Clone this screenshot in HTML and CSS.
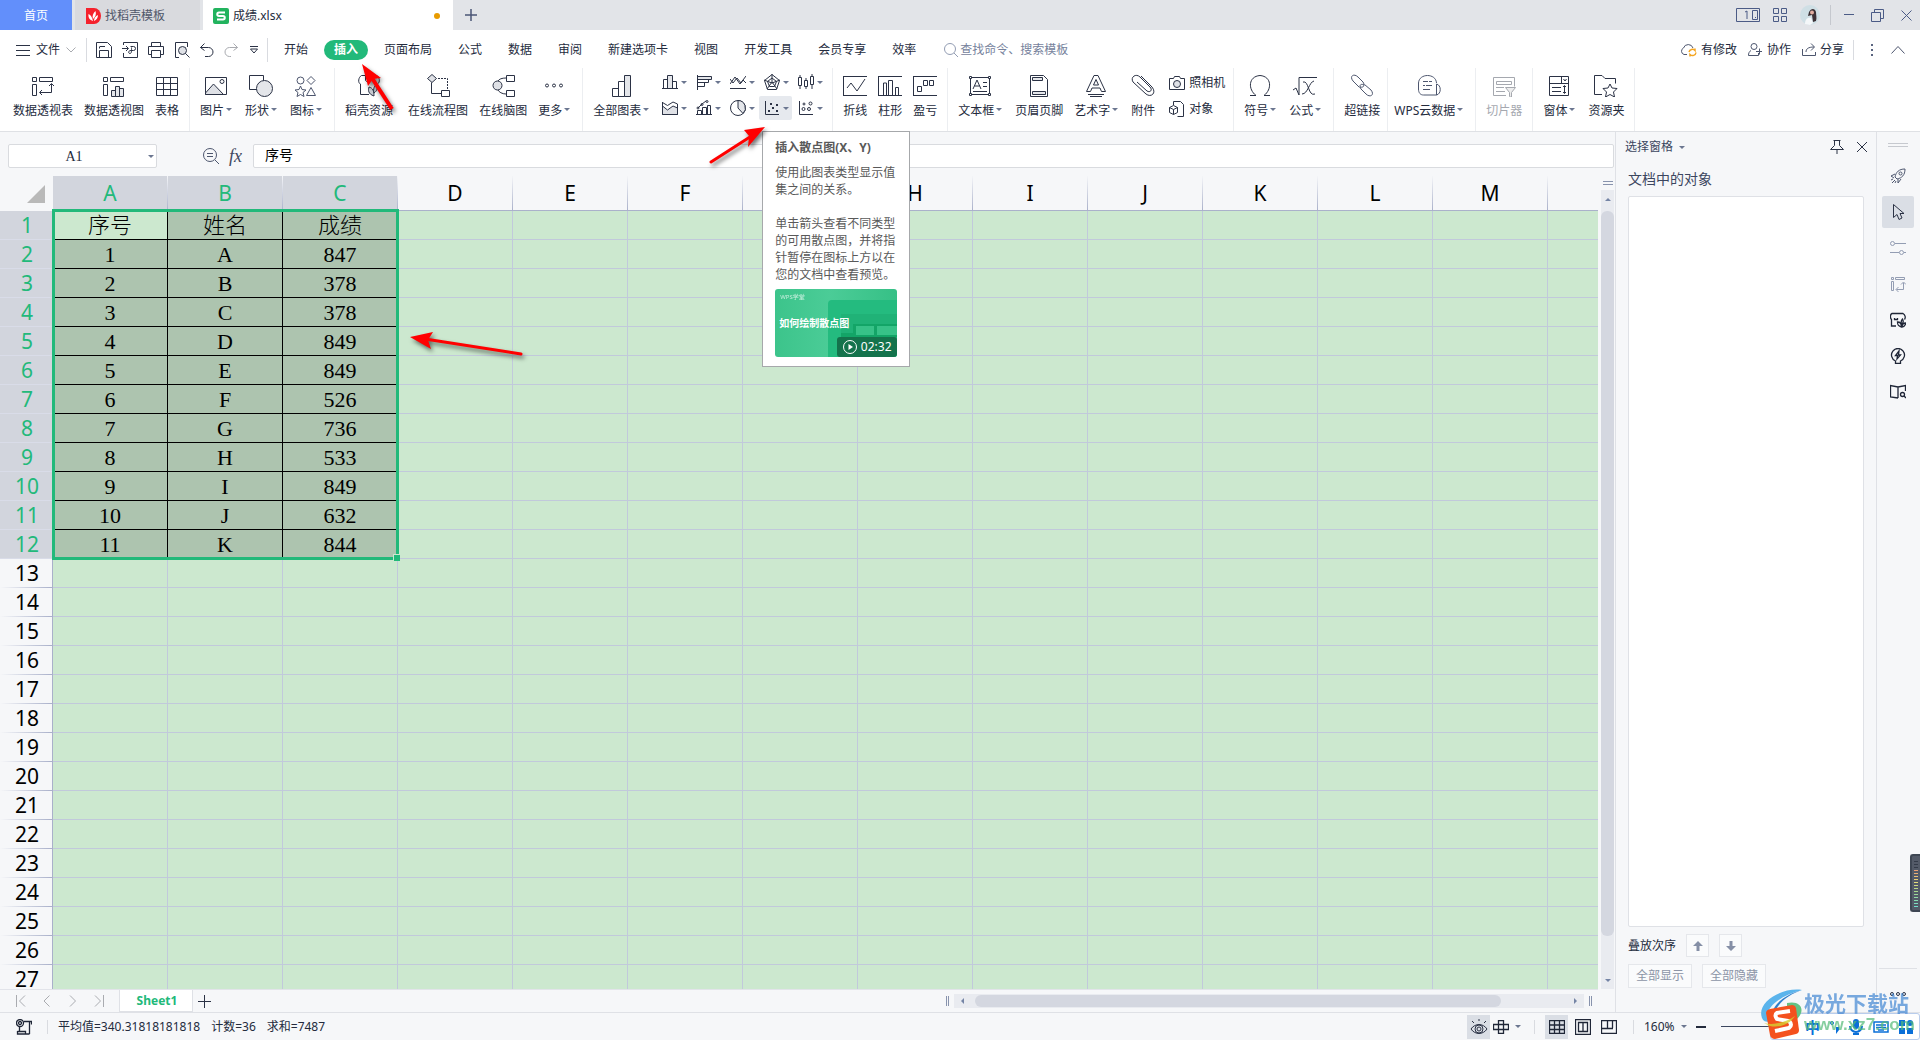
FILE: index.html
```html
<!DOCTYPE html>
<html lang="zh-CN">
<head>
<meta charset="utf-8">
<title>成绩.xlsx</title>
<link rel="stylesheet" href="styles.css">
</head>
<body>
<header class="titlebar">
  <button class="tab tab-home">首页</button>
  <button class="tab tab-docer"><svg width="15" height="16" viewBox="0 0 15 16"><path d="M0 0h8a7 8 0 0 1 0 16H0z" fill="#f5222d"/><path d="M7 13C4 12 2 10 2.500 6 5 7 6 9 7 13zM7 11C6 8 7 5 9.500 3c1 3 0 6-2.500 8zM8 13c0-3 1.500-5 4-6 0 3-1.500 5-4 6z" fill="#fff"/></svg>找稻壳模板</button>
  <button class="tab tab-file"><svg width="16" height="16" viewBox="0 0 16 16"><rect width="16" height="16" rx="2" fill="#22b35e"/><path d="M12 4.500H6A1.700 1.700 0 0 0 6 8h4a1.700 1.700 0 0 1 0 3.500H4" fill="none" stroke="#fff" stroke-width="2"/></svg><span>成绩.xlsx</span><i class="dot"></i></button>
  <button class="tab-add" aria-label="新建"><svg width="12" height="12" viewBox="0 0 12 12"><path d="M6 0v12M0 6h12" stroke="#4b5675" stroke-width="1.500"/></svg></button>
  <div class="window-tools">
    <svg width="24" height="14" viewBox="0 0 24 14" class="line blue"><path d="M.5.500h23v13H.5zM16.500 2.500h5v9h-5zM9 4l2-1v8M19 9.500h1"/></svg>
    <svg width="14" height="14" viewBox="0 0 14 14" class="line blue"><path d="M.5.500h5v5h-5zM8.500.500h5v5h-5zM.5 8.500h5v5h-5zM8.500 8.500h5v5h-5z"/></svg>
    <svg width="20" height="20" viewBox="0 0 20 20"><circle cx="10" cy="10" r="10" fill="#cfdfe5"/><path d="M9 7c2-4 6-4 7 0 0 3 1 6 0 9l-3 1-1-7-4 1z" fill="#3b3035"/><path d="M5 19c0-4 2-7 6-6l2 5-3 2z" fill="#f4f7f9"/><circle cx="12" cy="7.500" r="2" fill="#e0ada0"/></svg>
    <span class="vr"></span>
    <svg width="10" height="12" viewBox="0 0 10 12" class="line blue"><path d="M0 5.500h10"/></svg>
    <svg width="13" height="13" viewBox="0 0 13 13" class="line blue"><path d="M.5 3.500h9v9h-9zM3.500 3.500v-3h9v9h-3"/></svg>
    <svg width="11" height="11" viewBox="0 0 11 11" class="line blue"><path d="M.5.500l10 10M10.500.500l-10 10"/></svg>
  </div>
</header>

<nav class="menubar">
  <button class="file-menu"><svg width="14" height="11" viewBox="0 0 14 11" class="line"><path d="M0 .5h14M0 5.500h14M0 10.500h14"/></svg>文件<svg width="10" height="6" viewBox="0 0 10 6" class="line grey"><path d="M.5.500L5 5 9.500.500"/></svg></button>
  <span class="vr"></span>
  <div class="quick">
    <button aria-label="保存"><svg width="16" height="16" viewBox="0 0 16 16" class="line"><path d="M.5.500h11l4 4v11H.5zM3.500 15v-6.500h9V15M4 4.500h5M3.500 4.500v2"/></svg></button>
    <button aria-label="输出为PDF"><svg width="16" height="16" viewBox="0 0 16 16" class="line"><path d="M1.500 3V.5h14v15h-14V11M0 6.500h6M4 4l2.500 2.500L4 9M8.500 4.500h3a2 2 0 0 1 0 4H9c-3 0-3 3-1 3s1.500-4 1.500-6"/></svg></button>
    <button aria-label="打印"><svg width="16" height="16" viewBox="0 0 16 16" class="line"><path d="M3.500 4.500v-4h9v4M3.500 12.500h-3v-8h15v8h-3M3.500 8.500h9v7h-9z"/></svg></button>
    <button aria-label="打印预览"><svg width="16" height="16" viewBox="0 0 16 16" class="line"><path d="M5 15.500H1.500V.5h12V5"/><circle cx="8.500" cy="8.500" r="4" fill="#dfe1e6"/><path d="M11.500 11.500l4 4"/></svg></button>
    <button aria-label="撤销"><svg width="14" height="14" viewBox="0 0 14 14" class="line"><path d="M4.500.500L.5 4.500l4 3M.5 4.500h8a4.500 4.500 0 0 1 0 9H5"/></svg></button>
    <button aria-label="恢复"><svg width="14" height="14" viewBox="0 0 14 14" class="line grey"><path d="M9.500.500l4 4-4 3M13.500 4.500h-8a4.500 4.500 0 0 0 0 9H7"/></svg></button>
    <button aria-label="更多快捷"><svg width="8" height="8" viewBox="0 0 8 8" class="line"><path d="M0 .5h8M.5 3l3.500 4L7.500 3z"/></svg></button>
  </div>
  <span class="vr"></span>
  <div class="menus">
    <button>开始</button><button class="active">插入</button><button>页面布局</button><button>公式</button><button>数据</button><button>审阅</button><button>新建选项卡</button><button>视图</button><button>开发工具</button><button>会员专享</button><button>效率</button>
  </div>
  <label class="search"><svg width="14" height="14" viewBox="0 0 14 14" class="line soft"><circle cx="6" cy="6" r="5.500"/><path d="M10 10l4 4"/></svg><input type="text" placeholder="查找命令、搜索模板" aria-label="查找命令"></label>
  <div class="share">
    <button><svg width="17" height="14" viewBox="0 0 17 14" class="line slate"><path d="M7 11.500H4A3.500 3.500 0 0 1 3.500 5a5 5 0 0 1 9.500 0"/><path d="M9 9a3.500 3.500 0 0 1 6-1.500V5.500M16 9.500a3.500 3.500 0 0 1-6 2v2" stroke="#f5a623" stroke-width="1.500"/></svg>有修改</button>
    <button><svg width="15" height="14" viewBox="0 0 15 14" class="line slate"><circle cx="6" cy="3.500" r="3"/><path d="M3 7.500c-2 1-2.500 3-2.500 5h10V10M8 8.500h6M11.500 5.500v6"/></svg>协作</button>
    <button><svg width="14" height="14" viewBox="0 0 14 14" class="line slate"><path d="M.5 6v6.500h13V9M4 9c0-3 2-5 8-5M9 .5L12.500 4 9 7.500"/></svg>分享</button>
    <span class="vr"></span>
    <button aria-label="更多"><svg width="3" height="12" viewBox="0 0 3 12"><path d="M0 0h2v2H0zM0 5h2v2H0zM0 10h2v2H0z" fill="#59647f"/></svg></button>
    <button aria-label="收起"><svg width="14" height="8" viewBox="0 0 14 8" class="line slate"><path d="M.5 7.500L7 .5l6.500 7"/></svg></button>
  </div>
</nav>

<section class="ribbon">
  <div class="group">
    <button><svg class="big line" viewBox="0 0 24 24"><path d="M1.500 4.500h4v4h-4zM8.500 4.500h13v4h-13zM1.500 11.500h4v11h-4zM20.500 11v8.500H9M18 13l2.500-2.500L23 13M11 17l-2.500 2.500L11 22"/></svg>数据透视表</button>
    <button><svg class="big line" viewBox="0 0 24 24"><path d="M1.500 4.500h4v4h-4zM8.500 4.500h13v4h-13zM1.500 11.500h4v11h-4z"/><path fill="#e4e6ea" d="M9.500 17.500h4v6h-4zM13.500 13.500h4v10h-4zM17.500 15.500h4v8h-4z"/></svg>数据透视图</button>
    <button><svg class="big line" viewBox="0 0 24 24"><path d="M1.500 4.500h21v18h-21zM1.500 10.500h21M1.500 16.500h21M8.500 4.500v18M15.500 4.500v18"/></svg>表格</button>
  </div>
  <div class="group">
    <button class="drop"><svg class="big line" viewBox="0 0 24 24"><path d="M1.500 4.500h21v17h-21z"/><path fill="#dfe1e6" d="M1.500 20l8-9 10 10.500h-18z"/><circle cx="18" cy="8.500" r="2"/></svg>图片</button>
    <button class="drop"><svg class="big line" viewBox="0 0 24 24"><path d="M.5 2.500h14v14H.5z"/><circle cx="15.500" cy="15.500" r="8" fill="#e4e6ea"/></svg>形状</button>
    <button class="drop"><svg class="big line slate" viewBox="0 0 24 24"><circle cx="6.500" cy="7.500" r="3.500"/><path d="M17 3.500L21 7.500l-4 4-4-4zM17 14.500l4.500 8h-9zM6.500 13l1.500 3.500 4 .5-3 2.500 1 4-3.500-2-3.500 2 1-4-3-2.500 4-.5z"/></svg>图标</button>
  </div>
  <div class="group">
    <button><svg class="big line" viewBox="0 0 24 24"><path d="M3.500 11v10.500H12M3.500 11c-3-1-2-7 1-8.500h15c3 1 4 7 1 8.500M8.500 2.500v5a3 3 0 0 0 5 0v-5"/><path fill="#c9ccd3" d="M17 23c-6-2-6-6-5-9 4 1 5 4 5 9zM17 20c-1-4 0-7 3-9 1 4 0 7-3 9z"/></svg>稻壳资源</button>
    <button class="flow"><svg class="big line" viewBox="0 0 24 24"><path fill="#dfe1e6" d="M6 1.500l4.500 4L6 9.500l-4.500-4z"/><path d="M5.500 9.500v11h10M15.500 17.500h8v6h-8z"/><path stroke-dasharray="2 1" d="M12 5.500h9.500V17"/></svg>在线流程图</button>
    <button><svg class="big line" viewBox="0 0 24 24"><circle cx="6.500" cy="12.500" r="4.500" fill="#dfe1e6"/><path d="M15.500 2.500h8v6h-8zM15.500 17.500h8v6h-8zM7 8c1-2 4-3 8-3M7 17c1 2 4 4 8 4"/></svg>在线脑图</button>
    <button class="drop"><svg class="big line" viewBox="0 0 24 24"><circle cx="5" cy="12.500" r="1.500"/><circle cx="12" cy="12.500" r="1.500"/><circle cx="19" cy="12.500" r="1.500"/></svg>更多</button>
  </div>
  <div class="group charts">
    <button class="drop"><svg class="big line" viewBox="0 0 24 24"><path d="M3.500 15.500h6v8h-6zM9.500 8.500h6v15h-6z"/><path fill="#e4e6ea" d="M15.500 2.500h6v21h-6z"/></svg>全部图表</button>
    <div class="chart-grid">
      <button class="mini" aria-label="柱形图"><svg class="small line" viewBox="0 0 16 16"><path fill="#e4e6ea" d="M5.500 1.500h5v13h-5z"/><path d="M1.500 5.500h4v9h-4zM10.500 7.500h4v7h-4zM0 14.500h16"/></svg></button>
      <button class="mini" aria-label="条形图"><svg class="small line" viewBox="0 0 16 16"><path fill="#e4e6ea" d="M1.500 2.500h14v3h-14z"/><path d="M1.500 1v15M1.500 5.500h11v3h-11M1.500 8.500h7v4h-7"/></svg></button>
      <button class="mini" aria-label="折线图"><svg class="small line" viewBox="0 0 16 16"><path d="M0 10l5-7 5 7 6-8M0 5l3 4 4-5 4 5 2-3 3 3M0 14.500h16"/></svg></button>
      <button class="mini" aria-label="雷达图"><svg class="small line" viewBox="0 0 16 16"><path d="M8 .5l7.500 6-3 9h-9l-3-9zM8 4l4.500 3.500-2 5h-5l-2-5zM8 0v8M0 6l8 3 8-3M3 15l5-7 5 7"/></svg></button>
      <button class="mini" aria-label="股价图"><svg class="small line" viewBox="0 0 16 16"><path d="M.5 3.500h3v8h-3zM6.500 6.500h3v6h-3zM12.500 2.500h3v8h-3zM2 1v2M2 12v3M8 4v2M8 13v2M14 0v2M14 11v4"/></svg></button>
      <button class="mini" aria-label="面积图"><svg class="small line" viewBox="0 0 16 16"><path d="M.5 2.500l5 3L11 2l4.500 2"/><path fill="#dfe1e6" d="M.5 6l5 4L11 6l4.500 2v6.500H.5z"/><path d="M.5 2v12.500h15V4"/></svg></button>
      <button class="mini" aria-label="组合图"><svg class="small line" viewBox="0 0 16 16"><path d="M1.500 10.500h4v4h-4zM6.500 7.500h4v7h-4zM11.500 5.500h3v9h-3zM0 14.500h16M2 8l4-4 4-3"/><circle cx="2" cy="8" r="1"/><circle cx="6" cy="4.500" r="1"/><circle cx="11" cy="1.500" r="1"/></svg></button>
      <button class="mini" aria-label="饼图"><svg class="small line" viewBox="0 0 16 16"><circle cx="8" cy="8" r="7.500"/><path fill="#e4e6ea" d="M8 .5V8l5 5.500A7.500 7.500 0 0 0 8 .5z"/></svg></button>
      <button class="mini on" aria-label="散点图"><svg class="small line" viewBox="0 0 16 16"><path d="M1.500 1v13.500H15"/><path class="solid" d="M4 10h2v2H4zM8 7h2v2H8zM6 3h2v2H6zM12 10h2v2h-2zM12 4h2v2h-2z"/></svg></button>
      <button class="mini" aria-label="其他图表"><svg class="small line" viewBox="0 0 16 16"><path d="M1.500 1v13.500H15"/><circle cx="6" cy="4" r="1"/><circle cx="5.500" cy="9" r="1.500"/><circle cx="11" cy="9" r="1.500"/><circle cx="12.500" cy="3.500" r="1.500"/></svg></button>
      <aside class="tip">
        <h2>插入散点图(X、Y)</h2>
        <p>使用此图表类型显示值集之间的关系。</p>
        <p>单击箭头查看不同类型的可用散点图，并将指针暂停在图标上方以在您的文档中查看预览。</p>
        <div class="video">
          <svg class="sheet-art" width="69" height="57" viewBox="0 0 69 57"><path d="M0 57V4q0-4 4-4h65v57z" fill="#24bb7f"/><path d="M13 14h56v43H13z" fill="#20b277"/><path d="M13 33h56v4H13zM13 46h56v3H13zM25 24h44v2H25zM25 24h3v33h-3zM46 24h3v33h-3z" fill="#13a567"/><path d="M28 26h18v9H28zM49 26h20v9H49z" fill="#37c288"/></svg>
          <small>WPS学堂</small><strong>如何绘制散点图</strong><span class="time"><svg width="14" height="14" viewBox="0 0 14 14"><circle cx="7" cy="7" r="6.500" fill="none" stroke="#fff"/><path d="M5.500 4v6L10 7z" fill="#fff"/></svg>02:32</span></div>
      </aside>
    </div>
  </div>
  <div class="group">
    <button><svg class="big line" viewBox="0 0 24 24"><path d="M.5 3v19M0 3.500h24M0 22.500h24M4 15l4-5 6 8 8-12"/></svg>折线</button>
    <button><svg class="big line" viewBox="0 0 24 24"><path d="M.5 3v19M0 3.500h24M0 22.500h24M5.500 22v-12h3v12M10.500 22V7.500h4V22M17.500 22v-7.500h3V22"/></svg>柱形</button>
    <button><svg class="big line" viewBox="0 0 24 24"><path d="M.5 3v19M0 3.500h24M0 22.500h24M4.500 13.500h4v5h-4zM10.500 7.500h4v5h-4zM16.500 7.500h4v5h-4z"/></svg>盈亏</button>
  </div>
  <div class="group">
    <button class="drop"><svg class="big line" viewBox="0 0 24 24"><path d="M2.500 4.500h19v17h-19zM5 16l4-9 4 9M6.500 13h5M15 9.500h4M15 13.500h4M5 18.500h14"/><path fill="#fff" d="M1.500 3.500h2v2h-2zM20.500 3.500h2v2h-2zM1.500 20.500h2v2h-2zM20.500 20.500h2v2h-2z"/></svg>文本框</button>
    <button><svg class="big line" viewBox="0 0 24 24"><path d="M3.500 2.500h13l4 4v17h-17z"/><path fill="#e4e6ea" d="M5.500 4.500h10v3h-10zM5.500 18.500h13v3h-13z"/></svg>页眉页脚</button>
    <button class="drop"><svg class="big line" viewBox="0 0 24 24"><path d="M2.500 18.500L10 2.500h4l7.500 16h-4L16 15H8l-1.500 3.500zM9.500 12L12 6.500l2.500 5.500zM4 21.500h16M6 23.500h12"/></svg>艺术字</button>
    <button><svg class="big line" viewBox="0 0 24 24"><path d="M10 3l11 11c5 6-1 11-6 7L2 9C-1 4 5 0 9 4l10 10c3 3 0 6-3 4L6 9"/></svg>附件</button>
    <div class="stack">
      <button><svg class="small line" viewBox="0 0 16 16"><path d="M.5 3.500h4l1-2h5l1 2h4v11H.5z"/><circle cx="8" cy="9" r="3.500" fill="#dfe1e6"/></svg>照相机</button>
      <button><svg class="small line" viewBox="0 0 16 16"><path d="M4.500 4V.5h7l3 3v12h-6M4.500 4.500l4 2v5l-4 2-4-2v-5zM.5 6.500l4 2 4-2M4.500 8.500v5"/></svg>对象</button>
    </div>
  </div>
  <div class="group">
    <button class="drop"><svg class="big line" viewBox="0 0 24 24"><path d="M2 22.500h6c-8-6-8-19 4-20 12 1 12 14 4 20h6"/></svg>符号</button>
    <button class="drop"><svg class="big line" viewBox="0 0 24 24"><path d="M0 17l3-2 3 7V4.500h18M10 9c6-2 5 15 12 12M21 8c-5 1-6 13-12 13"/></svg>公式</button>
  </div>
  <div class="group link-group">
    <button><svg class="big line slate" viewBox="0 0 24 24"><path d="M9.500 14.500L3 8C-1 3 4 0 8 4l5 5c2 3 1 6-3 5M14.500 11.500L21 17c4 5-1 8-5 4l-5-5c-2-3-1-6 3-4"/></svg>超链接</button>
  </div>
  <div class="group cloud-group">
    <button class="drop"><svg class="big line slate" viewBox="0 0 24 24"><path d="M19.500 10C19 0 2 0 1.500 10v6c0 4 2 6 5 6h13c5-1 5-10 0-11v11M6 8.500h5M12 8.500h3M6 12.500h2M9 12.500h6M6 16.500h7"/></svg>WPS云数据</button>
  </div>
  <div class="group">
    <button disabled><svg class="big line" viewBox="0 0 24 24"><path d="M14 22.500H1.500v-18h21v9M4.500 8.500h15v3h-15zM4 14.500h8M4 18.500h9"/><path fill="#eee" d="M13.500 14.500h10l-4 5v5l-2-1v-4z"/></svg>切片器</button>
  </div>
  <div class="group last">
    <button class="drop"><svg class="big line" viewBox="0 0 24 24"><path d="M2.500 3.500h19v19h-19zM2.500 10.500h19M14.500 4v6M16.500 6l1.500 2 1.500-2M5 14.500h9M5 18.500h9M17.500 13v7M16 14l1.500-1.500L19 14M16 19l1.500 1.500L19 19"/></svg>窗体</button>
    <button><svg class="big line" viewBox="0 0 24 24"><path d="M8 21.500H.5v-19H8l3 3h10.500v5"/><path d="M16 11l2 4 5 .5-3.500 3.500 1 5-4.500-2.500-4.500 2.500 1-5L9 15.500l5-.5z"/></svg>资源夹</button>
  </div>
</section>

<main class="workspace">
  <div class="editor">
    <div class="formula-bar">
      <div class="name-box"><input type="text" value="A1" aria-label="名称框"></div>
      <div class="fx"><svg width="16" height="16" viewBox="0 0 16 16" class="line slate"><circle cx="7" cy="7" r="6.500"/><path d="M12 12l4 4M4 5.500h6M4 8.500h6"/></svg><em>fx</em></div>
      <input class="formula" type="text" value="序号" aria-label="编辑栏">
    </div>
    <div class="grid-row">
      <div class="grid-view">
        <table class="grid"><thead></thead><tbody></tbody></table>
        <div class="selection"></div>
        <svg class="arrow arrow-table" viewBox="0 0 120 40"><path d="M15 8l96 15" stroke="#f00" stroke-width="3" stroke-linecap="round"/><path d="M0 6l23-5-5 8 3 9z" fill="#f00"/></svg>
      </div>
      <div class="vscroll"><i class="split"></i><div class="track"><i class="thumb"></i></div></div>
    </div>
    <div class="sheet-bar">
      <div class="sheet-nav">
        <button aria-label="第一张"><svg width="10" height="12" viewBox="0 0 10 12" class="line grey"><path d="M.5 0v12M9 .5L3.500 6 9 11.500"/></svg></button>
        <button aria-label="上一张"><svg width="10" height="12" viewBox="0 0 10 12" class="line grey"><path d="M7.500.500L2 6l5.500 5.500"/></svg></button>
        <button aria-label="下一张"><svg width="10" height="12" viewBox="0 0 10 12" class="line grey"><path d="M2 .5L7.500 6 2 11.500"/></svg></button>
        <button aria-label="最后一张"><svg width="10" height="12" viewBox="0 0 10 12" class="line grey"><path d="M9.500 0v12M1 .5L6.500 6 1 11.500"/></svg></button>
      </div>
      <button class="sheet-tab">Sheet1</button>
      <button aria-label="新建工作表"><svg width="13" height="13" viewBox="0 0 13 13" class="line"><path d="M6.500 0v13M0 6.500h13"/></svg></button>
      <div class="hscroll"><i class="bars"></i><div class="track"><i class="thumb"></i></div><i class="bars"></i></div>
    </div>
  </div>
  <aside class="pane">
    <div class="pane-head"><button class="drop-inline">选择窗格</button><svg width="14" height="14" viewBox="0 0 14 14" class="line"><path d="M3.500.500h7M4.500.500v5l-4 4h13l-4-4v-5M7 10v4"/></svg><svg width="10" height="10" viewBox="0 0 10 10" class="line"><path d="M0 0l10 10M10 0L0 10"/></svg></div>
    <h3>文档中的对象</h3>
    <div class="object-list"></div>
    <div class="order"><span>叠放次序</span><button aria-label="上移"><svg width="10" height="10" viewBox="0 0 10 10"><path d="M5 0l5 5H6.500v5h-3V5H0z" fill="#858fa6"/></svg></button><button aria-label="下移"><svg width="10" height="10" viewBox="0 0 10 10"><path d="M5 10L0 5h3.500V0h3v5H10z" fill="#858fa6"/></svg></button></div>
    <div class="showhide"><button>全部显示</button><button>全部隐藏</button></div>
  </aside>
  <aside class="rail">
    <i class="grip"></i>
    <button aria-label="快捷"><svg class="small line slate" viewBox="0 0 16 16"><path d="M5 9c1-5 4-8 10-8 0 6-3 9-8 10zM5 6L1 8l3 2M8 11l0 4 3-4M1 12l2-1M2 15l3-3M5 15l1-2"/><circle cx="10.500" cy="5.500" r="1.500"/></svg></button>
    <button class="on" aria-label="选择"><svg class="small line" viewBox="0 0 16 16"><path d="M3.500.500v13l3.500-3 2 5 3-1.500-2-4.500h4z"/></svg></button>
    <button aria-label="属性"><svg class="small line soft" viewBox="0 0 16 16"><circle cx="2.500" cy="3.500" r="2"/><circle cx="11.500" cy="12.500" r="2"/><path d="M5 3.500h11M0 12.500h9M14 12.500h2"/></svg></button>
    <button aria-label="分析"><svg class="small line soft" viewBox="0 0 16 16"><path d="M1.500 1.500h2v2h-2zM5.500 1.500h9v2h-9zM1.500 5.500h2v9h-2zM13.500 7v6.500h-7M11 8.500L13.500 6 16 8.500M8.500 11L6 13.500 8.500 16"/></svg></button>
    <button aria-label="稻壳"><svg class="small line bold" viewBox="0 0 16 16"><path d="M1.500 7v7H6M1.500 7.500C0 6 0 2 2 1.500h11c2 1 3 4 1.500 6M4.500 6v1.500h3V6"/><path d="M11.500 15c-4-1-4-3-4-5 3 0 4 2 4 5zM11.500 12c-1-3 0-4 1-5 1 2 1 4-1 5zM12 15c0-3 1-4 4-4-1 3-2 4-4 4z"/></svg></button>
    <button aria-label="灵感"><svg class="small line bold" viewBox="0 0 16 16"><path d="M5.500 13A6.500 6.500 0 1 1 10.500 13v2.500h-5zM9 3L5.500 7.500h2L7 11l3.500-4h-2z"/></svg></button>
    <button aria-label="查找"><svg class="small line bold" viewBox="0 0 16 16"><path d="M8 14l-7.500-1V1.500L8 3l7.500-1.500V7M8 3v11"/><circle cx="12.500" cy="10.500" r="2"/><path d="M14 12l2 2"/></svg></button>
    <div class="rail-more"><svg width="18" height="6" viewBox="0 0 18 6" class="line"><circle cx="3" cy="3" r="1.500"/><circle cx="9" cy="3" r="1.500"/><circle cx="15" cy="3" r="1.500"/></svg></div>
  </aside>
</main>

<footer class="status">
  <svg width="16" height="16" viewBox="0 0 16 16" class="line bold"><circle cx="4" cy="4" r="3.500"/><circle cx="4" cy="4" r="1.500"/><path d="M8 2.500h7.500v3M13.500 3v12M3.500 8v4M1.500 12v3h12M1.500 12.500h8v2"/></svg>
  <span class="vr"></span>
  <span class="stats"><span>平均值=340.31818181818</span><span>计数=36</span><span>求和=7487</span></span>
  <div class="views">
    <button class="on" aria-label="护眼模式"><svg width="18" height="16" viewBox="0 0 18 16" class="line"><path d="M1 10c4-6 12-6 16 0-4 6-12 6-16 0zM9 0v2M2 2l2 2M16 2l-2 2"/><circle cx="9" cy="10" r="4"/><circle cx="9" cy="10" r="2"/></svg></button>
    <button class="drop-inline" aria-label="阅读模式"><svg width="16" height="14" viewBox="0 0 16 14" class="line bold"><path d="M5.500.500h5v13h-5zM.5 4.500h15v5H.5z"/></svg></button>
    <span class="vr"></span>
    <button class="on" aria-label="普通视图"><svg width="16" height="14" viewBox="0 0 16 14" class="line bold"><path d="M.5.500h15v13H.5zM0 5h16M0 9.500h16M5.500 0v14M10.500 0v14"/></svg></button>
    <button aria-label="分页预览"><svg width="16" height="16" viewBox="0 0 16 16" class="line bold"><path d="M.5.500h15v15H.5zM3.500 3.500h9v9h-9zM8 3v10"/></svg></button>
    <button aria-label="页面布局"><svg width="16" height="14" viewBox="0 0 16 14" class="line bold"><path d="M.5.500h15v13H.5zM6.500 0v8M11.500 0v8M0 8.500h12"/></svg></button>
    <span class="vr"></span>
    <button class="drop-inline">160%</button>
    <button aria-label="缩小"><svg width="10" height="2" viewBox="0 0 10 2"><path d="M0 0h10v2H0z" fill="#242b3d"/></svg></button>
    <i class="zoom-line"></i>
  </div>
</footer>

<svg class="arrow arrow-menu" viewBox="0 0 50 60"><path d="M14 15l22 34" stroke="#f00" stroke-width="4"/><path d="M6 4l19 14-8 1-5 7z" fill="#f00"/></svg>
<svg class="arrow arrow-chart" viewBox="0 0 70 50"><path d="M4 41l42-27" stroke="#f00" stroke-width="3" stroke-linecap="round"/><path d="M58 6L37 9l5 6-1 11z" fill="#f00"/></svg>
<div class="meter"></div>
<div class="ime">
  <span>中</span>
  <svg width="10" height="16" viewBox="0 0 10 16"><circle cx="2" cy="4" r="1.500" fill="none" stroke="#0a6fd8"/><path d="M6 8h3v3l-3 4z" fill="#0a6fd8"/></svg>
  <svg width="14" height="16" viewBox="0 0 14 16"><rect x="4" width="6" height="10" rx="3" fill="#0a6fd8"/><path d="M1 7a6 6 0 0 0 12 0M7 12v3M4 15h6" stroke="#0a6fd8" stroke-width="2" fill="none"/></svg>
  <svg width="16" height="12" viewBox="0 0 16 12"><path d="M1 1h14v10H1zM3 4h10M3 6.500h10M5 9h6" stroke="#0a6fd8" stroke-width="1.500" fill="none"/></svg>
  <svg width="14" height="14" viewBox="0 0 14 14"><path d="M0 0h6v6H0zM0 8h6v6H0zM8 8h6v6H8z" fill="#0a6fd8"/><circle cx="11" cy="3" r="3" fill="#0a6fd8"/></svg>
</div>
<div class="watermark">
  <svg width="44" height="52" viewBox="0 0 44 52"><path d="M42 2C22-1-4 14 2 30c1 3 4 4 7 4C2 22 18 8 42 2z" fill="#5bb4ec"/><path d="M42 2C26 6 11 17 13 27c6-14 17-21 29-25z" fill="#2f7fcb"/><path d="M27 15c14-3 19 7 10 16-8 8-21 10-30 7 14-1 29-7 28-15 0-4-4-5-8-3z" fill="#64c284"/><path d="M10 21l22-4q3 0 4 3l3 22q0 3-3 4l-21 5q-4 0-5-4L6 25q0-3 4-4z" fill="#f4511e"/><path d="M30 23l-13 2q-3 2 0 6l12 2q4 4 0 7l-14 3" fill="none" stroke="#fff" stroke-width="4"/><path d="M4 35c10 3 22-1 31-7-5 8-15 12-25 10z" fill="#d5ce30" opacity=".8"/></svg>
  <div><b>极光下载站</b><span>www.xz7.com</span></div>
</div>
<script src="grid.js"></script>
</body>
</html>
```
FILE: grid.js
```js
const records = [
  ['序号', '姓名', '成绩'], [1, 'A', 847], [2, 'B', 378], [3, 'C', 378],
  [4, 'D', 849], [5, 'E', 849], [6, 'F', 526], [7, 'G', 736],
  [8, 'H', 533], [9, 'I', 849], [10, 'J', 632], [11, 'K', 844]
];
const letters = [...'ABCDEFGHIJKLM', ''];
const selectedColumns = 3;
const rowCount = 27;

function add(parent, tag, text, className) {
  const el = document.createElement(tag);
  if (text !== undefined) el.textContent = text;
  if (className) el.className = className;
  parent.appendChild(el);
  return el;
}

const head = add(document.querySelector('.grid thead'), 'tr');
add(head, 'th', '', 'corner');
letters.forEach((l, i) => add(head, 'th', l, i < selectedColumns ? 'picked' : ''));

const body = document.querySelector('.grid tbody');
for (let r = 0; r < rowCount; r++) {
  const row = add(body, 'tr');
  const data = records[r];
  add(row, 'th', r + 1, data ? 'picked' : '');
  letters.forEach((_, c) => {
    const filled = data && c < selectedColumns;
    add(row, 'td', filled ? data[c] : '', filled ? (r + c ? 'data' : 'data current') : '');
  });
}
```
FILE: styles.css
```css
* { box-sizing: border-box; }
html, body { height: 100%; }
body {
  margin: 0;
  display: flex;
  flex-direction: column;
  position: relative;
  overflow: hidden;
  background: #f6f7f9;
  color: #242b3d;
  font: 12px/16px "Noto Sans", "Noto Sans CJK SC", sans-serif;
}
button {
  border: 0;
  padding: 0;
  background: none;
  color: inherit;
  font: inherit;
  white-space: nowrap;
  display: flex;
  align-items: center;
}
input { font: inherit; color: inherit; outline: 0; }
svg { flex: none; display: block; }
.line { fill: none; stroke: #2b3245; stroke-width: 1; }
.line.blue { stroke: #4b5b86; }
.line.grey { stroke: #a9abb0; }
.line.slate { stroke: #4d566e; }
.line.soft { stroke: #939db3; }
.line.bold { stroke: #1f2637; stroke-width: 1.3; }
.solid { fill: #2b3245; stroke: none; }
.vr { width: 1px; background: #d9dbe0; flex: none; }

.titlebar { display: flex; height: 30px; background: #e2e4e8; flex: none; }
.tab { height: 30px; gap: 4px; padding-top: 1px; }
.tab-home { width: 72px; justify-content: center; background: #628ffb; color: #fff; }
.tab-docer { width: 125px; margin: 0 3px; padding-left: 11px; background: #d9dade; color: #50576a; }
.tab-file { width: 250px; padding-left: 10px; background: #fff; }
.dot { width: 6px; height: 6px; border-radius: 3px; background: #e89b00; margin: 0 13px 0 auto; }
.tab-add { margin-left: 12px; }
.window-tools { margin-left: auto; display: flex; align-items: center; gap: 13px; padding-right: 8px; }
.window-tools .vr { height: 20px; margin-left: -3px; background: #c5c8ce; }
.window-tools svg:nth-last-child(2) { margin: 0 4px; }

.menubar { display: flex; align-items: center; height: 38px; background: #fff; flex: none; padding: 2px 0 0 16px; }
.menubar > .vr { height: 24px; }
.file-menu { gap: 6px; width: 70px; }
.quick { display: flex; align-items: center; gap: 10px; width: 162px; margin: 0 9px; }
.quick button:last-child { margin-left: auto; }
.menus { display: flex; align-items: center; margin-left: 6px; }
.menus button { padding: 0 10px; margin-right: 6px; height: 20px; border-radius: 10px; }
.menus .active { background: #22b97a; color: #fff; font-weight: bold; }
.search { display: flex; align-items: center; gap: 2px; margin-left: 12px; }
.search input { width: 120px; border: 0; padding: 0; background: none; }
.search input::placeholder { color: #76829c; opacity: 1; }
.share { display: flex; align-items: center; gap: 11px; margin-left: auto; padding-right: 15px; }
.share button { gap: 4px; }
.share .vr { height: 20px; margin-left: -2px; }
.share .vr + button { margin: 0 6px; }

.ribbon { display: flex; height: 64px; background: #fff; border-bottom: 1px solid #dfe1e5; flex: none; }
.group { display: flex; align-items: flex-start; gap: 11px; padding: 0 10px; border-right: 1px solid #eceef1; }
.group:first-child { padding-left: 13px; }
.group > button { flex-direction: column; position: relative; padding-top: 5px; gap: 6px; }
.group > button:disabled { color: #a5a8af; }
.group > button:disabled .line { stroke: #a5a8af; }
.big { width: 24px; height: 24px; }
.small { width: 16px; height: 16px; }
.group > .drop { padding-right: 10px; }
.group > .drop .big { margin-right: -8px; }
.group > .drop::after { content: ""; position: absolute; right: 2px; top: 40px; }
.group > .drop::after, .mini::after, .drop-inline::after {
  border: 3px solid transparent;
  border-top-color: #6b7690;
  border-bottom: 0;
}
.group > .flow { margin: 0 0 0 4px; }
.link-group { padding-right: 7px; }
.cloud-group { padding-left: 6px; }
.chart-grid { display: grid; grid-template-columns: repeat(5, 34px); grid-auto-rows: 26px; margin-left: -5px; margin-right: -5px; position: relative; }
.mini { gap: 3px; height: 24px; width: 33px; padding-left: 5px; margin-top: 2px; border-radius: 2px; }
.mini::after, .drop-inline::after { content: ""; }
.mini.on { background: #e6e9ee; }
.stack { display: flex; flex-direction: column; gap: 10px; padding-top: 7px; margin: 0 -2px 0 3px; }
.stack button { gap: 4px; height: 16px; }

.tip {
  position: absolute;
  z-index: 5;
  left: 105px;
  top: 63px;
  width: 148px;
  height: 236px;
  padding: 7px 12px;
  background: #fff;
  border: 1px solid #a6a8ab;
  color: #595959;
}
.tip h2, .tip p { margin: 0 -2px 8px 0; font-size: 12px; line-height: 17px; width: 122px; }
.tip p { margin-bottom: 17px; }
.tip p:nth-of-type(2) { margin-bottom: 6px; }
.video { position: relative; height: 68px; width: 122px; border-radius: 3px; overflow: hidden; color: #fff; background: linear-gradient(90deg, #3cc48b, #4bcc97 45%, #36c086); }
.video small { position: absolute; left: 5px; top: 2px; font-size: 6px; line-height: 12px; opacity: .7; }
.video strong { position: absolute; z-index: 1; left: 4px; top: 26px; font-size: 10px; line-height: 16px; }
.sheet-art { position: absolute; right: 0; bottom: 0; }
.time { position: absolute; right: 0; bottom: 0; z-index: 2; display: flex; align-items: center; justify-content: center; gap: 4px; width: 60px; height: 20px; border-radius: 3px; background: #14734c; }

.workspace { display: flex; flex: 1; min-height: 0; }
.editor { flex: 1; min-width: 0; display: flex; flex-direction: column; }
.formula-bar { display: flex; align-items: center; height: 44px; padding: 3px 1px 0 8px; flex: none; }
.name-box { position: relative; width: 149px; }
.name-box input { width: 100%; height: 24px; border: 1px solid #d9dbdf; border-radius: 2px; text-align: center; background: #fff; padding: 3px 17px 0 0; font-family: "Liberation Serif", serif; font-size: 14px; display: block; }
.name-box::after { content: ""; position: absolute; right: 3px; top: 11px; border: 3px solid transparent; border-top-color: #6b7690; }
.fx { display: flex; align-items: center; gap: 10px; width: 96px; padding-left: 46px; }
.fx em { font: italic 18px/20px "Liberation Serif", serif; color: #3f4860; }
.formula { flex: 1; height: 24px; border: 1px solid #d9dbdf; border-radius: 2px; background: #fff; padding: 0 11px 4px; font-size: 14px; color: #000; }

.grid-row { display: flex; flex: 1; min-height: 0; }
.grid-view { position: relative; flex: 1; min-width: 0; overflow: hidden; border-bottom: 1px solid #e2e4ea; }
.grid { border-collapse: separate; border-spacing: 0; table-layout: fixed; width: 1663px; color: #000; }
.grid th, .grid td { padding: 0; overflow: hidden; text-align: center; font-weight: normal; }
.grid th { font-size: 21px; line-height: 26px; background: #f6f7f9; width: 115px; }
.grid thead th { height: 35px; border-bottom: 1px solid #a9b0ca; border-right: 1px solid; border-image: linear-gradient(#f6f7f9, #a9b0ca) 1; border-left: 0; border-top: 0; }
.grid thead .corner { width: 53px; border: 0; position: relative; }
.corner::after { content: ""; position: absolute; right: 8px; bottom: 8px; border: 9px solid #b9b9b9; border-top-color: transparent; border-left-color: transparent; }
.grid .picked { background: #d2d5dd; color: #22b97a; }
.grid tbody tr { height: 29px; }
.grid tbody th { width: 53px; padding: 0 0 2px 2px; border-right: 1px solid #a9b0ca; background-image: linear-gradient(90deg, transparent, #a9b0ca); background-size: 100% 1px; background-position: bottom; background-repeat: no-repeat; }
.grid tbody .picked { background: #d2d5dd; border-bottom: 1px solid #d9dce8; padding-bottom: 1px; }
.grid td { height: 29px; background: #cce8cf; border-right: 1px solid #c1c9db; border-bottom: 1px solid #c1c9db; font: 22px/28px "Liberation Serif", "Noto Sans CJK SC", serif; }
.grid .data { background: #adc4af; border-color: #000; font-weight: 300; line-height: 26px; padding-top: 1px; }
.grid .current { background: #cce8cf; }
.selection { position: absolute; left: 52px; top: 33px; width: 347px; height: 351px; border: 3px solid #22b97a; }
.selection::after { content: ""; position: absolute; right: -4px; bottom: -4px; width: 6px; height: 6px; background: #22b97a; border: 1px solid #cce8cf; border-width: 1px 0 0 1px; }
.vscroll { width: 17px; flex: none; display: flex; flex-direction: column; padding: 5px 1px 1px 3px; gap: 5px; }
.split { height: 4px; margin: 0 1px 0 2px; border: 1px solid #8893ad; border-width: 1px 0; }
.vscroll .track { position: relative; flex: 1; padding: 21px 0 53px; display: flex; background: #e9ebf0; }
.thumb { flex: 1; border-radius: 6px; background: #d4d7e0; }
.track::before, .track::after { content: ""; position: absolute; border: 3px solid transparent; }
.vscroll .track::before { left: 4px; top: 5px; border-bottom-color: #7484a5; }
.vscroll .track::after { left: 4px; bottom: 4px; border-top-color: #7484a5; }

.sheet-bar { display: flex; align-items: center; height: 22px; flex: none; }
.sheet-nav { display: flex; gap: 16px; width: 119px; padding-left: 16px; }
.sheet-tab { width: 74px; height: 22px; justify-content: center; background: #fff; color: #22b97a; font-weight: bold; border: 1px solid #dfe1e6; border-top: 0; padding-left: 2px; margin-right: 5px; }
.hscroll { display: flex; align-items: center; gap: 5px; margin-left: auto; width: 42%; max-width: 669px; padding-right: 23px; }
.bars { width: 3px; height: 10px; border: 1px solid #8893ad; border-width: 0 1px; }
.hscroll .track { position: relative; flex: 1; height: 14px; display: flex; padding: 1px 83px 1px 21px; background: #e9ebf0; }
.hscroll .track::before { left: 4px; top: 4px; border-right-color: #7484a5; }
.hscroll .track::after { right: 4px; top: 4px; border-left-color: #7484a5; }

.pane { width: 261px; flex: none; border-left: 1px solid #dfe1e6; padding: 7px 12px 24px; display: flex; flex-direction: column; color: #3c465f; }
.pane-head { display: flex; align-items: center; gap: 13px; margin: 0 -3px; height: 16px; }
.pane-head button { margin-right: auto; }
.drop-inline { gap: 6px; }
.pane h3 { margin: 14px 0 0; font-size: 14px; line-height: 20px; font-weight: normal; }
.object-list { flex: 1; margin-top: 7px; background: #fff; border: 1px solid #dfe1e6; border-radius: 2px; }
.order { display: flex; align-items: center; gap: 10px; margin-top: 7px; color: #242b3d; }
.order button { width: 23px; height: 23px; justify-content: center; background: #fafbfc; border: 1px solid #e5e7eb; }
.showhide { display: flex; gap: 10px; margin-top: 7px; color: #8c94a6; }
.showhide button { width: 64px; height: 24px; justify-content: center; background: #fafbfc; border: 1px solid #e5e7eb; }

.rail { width: 44px; flex: none; border-left: 1px solid #dfe1e6; padding: 11px 1px 0 0; display: flex; flex-direction: column; align-items: center; gap: 4px; }
.grip { width: 20px; height: 4px; border: 1px solid #c6c9cf; border-width: 1px 0; margin-bottom: 9px; }
.rail button { width: 32px; height: 32px; justify-content: center; border-radius: 2px; }
.rail .on, .views .on { background: #dadee5; }
.rail-more { margin-top: auto; width: 38px; height: 44px; border-top: 1px solid #dfe1e6; padding: 22px 0 0 10px; }

.status { display: flex; align-items: center; height: 28px; flex: none; border-top: 1px solid #dfe1e6; padding-left: 16px; }
.status .vr { height: 14px; margin: 0 10px 0 15px; }
.stats { display: flex; gap: 11px; }
.views { margin-left: auto; display: flex; align-items: center; width: 453px; gap: 3px; }
.views button { height: 24px; min-width: 23px; justify-content: center; }
.status .views .vr { margin: 0 7px 0 10px; }
.zoom-line { flex: 1; height: 1px; background: #3c465f; margin-left: 5px; }

.arrow { position: absolute; fill: none; filter: drop-shadow(2px 3px 2px #0008); z-index: 6; }
.arrow-menu { left: 356px; top: 60px; width: 50px; height: 60px; }
.arrow-chart { left: 707px; top: 121px; width: 70px; height: 50px; }
.arrow-table { left: 410px; top: 155px; width: 120px; height: 40px; }
.meter { position: absolute; right: 0; bottom: 128px; width: 10px; height: 58px; border: 2px solid #3e4653; border-right: 0; border-radius: 3px 0 0 3px; background: #535a68; }
.meter::after { content: ""; position: absolute; left: 2px; top: 5px; width: 4px; height: 46px; background: repeating-linear-gradient(transparent 0 1px, #535a68 1px 3px), linear-gradient(#333a48 16%, #e99673 17%, #e9dc78 45%, #9ed892 70%, #71dfcf); }
.ime { position: absolute; right: 0; bottom: 0; width: 150px; height: 27px; display: flex; align-items: center; justify-content: space-between; padding: 0 6px 0 34px; background: #fff; border: 1px solid #b9cdec; border-radius: 3px; color: #0a6fd8; }
.ime span { font-size: 15px; font-weight: bold; }
.watermark { position: absolute; right: 11px; bottom: 0; display: flex; width: 149px; height: 52px; }
.watermark div { display: flex; flex-direction: column; padding-top: 3px; opacity: .7; white-space: nowrap; margin-right: -5px; }
.watermark b { font-size: 21px; line-height: 24px; color: #4287d4; }
.watermark span { font: bold 17px/20px "Liberation Sans", sans-serif; color: #53ba77; }
```
